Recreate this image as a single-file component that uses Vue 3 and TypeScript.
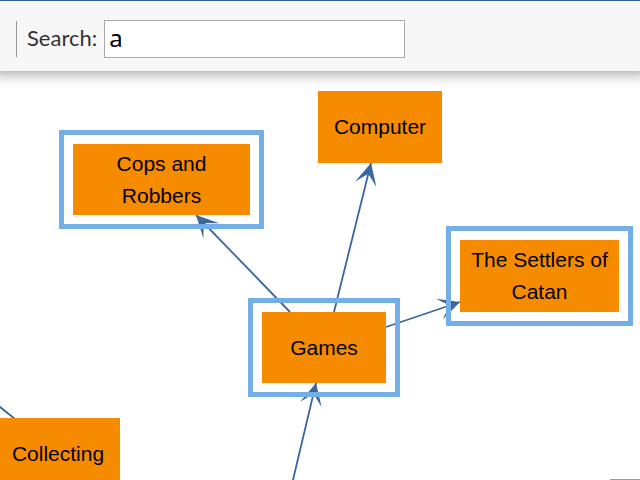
<script setup lang="ts">
import { ref } from 'vue'

interface DiagramNode {
  label: string
  x: number
  y: number
  width: number
  height: number
  highlighted: boolean
}

interface Link {
  from: [number, number]
  to: [number, number]
}

const query = ref('a')

const nodes: DiagramNode[] = [
  { label: 'Cops and Robbers', x: 73, y: 73, width: 177, height: 71, highlighted: true },
  { label: 'Computer', x: 318, y: 20, width: 124, height: 72, highlighted: false },
  { label: 'The Settlers of Catan', x: 460, y: 169, width: 159, height: 72, highlighted: true },
  { label: 'Games', x: 262, y: 241, width: 124, height: 71, highlighted: true },
  { label: 'Collecting', x: -4, y: 347, width: 124, height: 72, highlighted: false },
  { label: '', x: 610, y: 408, width: 124, height: 72, highlighted: false },
]

const links: Link[] = [
  { from: [290, 241], to: [196, 144] },
  { from: [334, 241], to: [371, 92] },
  { from: [386, 256], to: [460, 231] },
  { from: [288, 430], to: [316, 312] },
  { from: [15, 348], to: [-70, 280] },
]

function box(node: DiagramNode) {
  return {
    left: `${node.x}px`,
    top: `${node.y}px`,
    width: `${node.width}px`,
    height: `${node.height}px`,
  }
}
</script>

<template>
  <div class="page">
    <header class="toolbar">
      <form class="search" @submit.prevent>
        <label class="search-label" for="search">Search:</label>
        <input id="search" v-model="query" class="search-input" type="text" autocomplete="off" />
      </form>
    </header>
    <main class="canvas">
      <svg class="links" aria-hidden="true">
        <defs>
          <marker
            id="arrow"
            markerUnits="userSpaceOnUse"
            markerWidth="24"
            markerHeight="24"
            refX="22"
            refY="11"
            orient="auto"
          >
            <path d="M22 11 L0 0 L11 11 L0 22 Z" fill="#3b679e" />
          </marker>
        </defs>
        <path
          v-for="(link, i) in links"
          :key="i"
          class="link"
          :d="`M${link.from.join(' ')} L${link.to.join(' ')}`"
          marker-end="url(#arrow)"
        />
      </svg>
      <div
        v-for="(node, i) in nodes"
        :key="i"
        class="node"
        :class="{ highlighted: node.highlighted }"
        :style="box(node)"
      >
        {{ node.label }}
      </div>
    </main>
  </div>
</template>

<style>
body {
  margin: 0;
  background: #fff;
}
</style>

<style scoped>
.page {
  display: flex;
  flex-direction: column;
  height: 100vh;
  overflow: hidden;
}

.toolbar {
  position: relative;
  z-index: 1;
  flex: none;
  padding: 19px 16px 13px;
  border-top: 1px solid #365f96;
  background: #f7f7f7;
  box-shadow: 0 -8px 14px 10px rgba(0, 0, 0, 0.4);
}

.search {
  display: flex;
  align-items: center;
}

.search-label {
  padding: 0 7px 2px 10px;
  border-left: 1px solid #999;
  color: #333;
  font: 22px/34px Lato, "Liberation Sans", sans-serif;
}

.search-input {
  box-sizing: border-box;
  flex: 0 1 301px;
  min-width: 0;
  height: 38px;
  padding: 0 4px 4px;
  border: 1px solid #a9a9a9;
  border-radius: 0;
  outline: none;
  background: #fff;
  color: #000;
  font: 24px/32px "Noto Sans", "Liberation Sans", sans-serif;
}

.canvas {
  position: relative;
  flex: 1;
  overflow: hidden;
}

.links {
  position: absolute;
  inset: 0;
  width: 100%;
  height: 100%;
}

.link {
  fill: none;
  stroke: #3b679e;
  stroke-width: 1.8;
}

.node {
  position: absolute;
  display: flex;
  align-items: center;
  justify-content: center;
  box-sizing: border-box;
  padding: 0 8px;
  background: #f78b00;
  color: #000;
  font: 21px/32px "Liberation Sans", Arial, sans-serif;
  text-align: center;
}

.node.highlighted {
  outline: 5px solid #73afe6;
  outline-offset: 9px;
}
</style>
